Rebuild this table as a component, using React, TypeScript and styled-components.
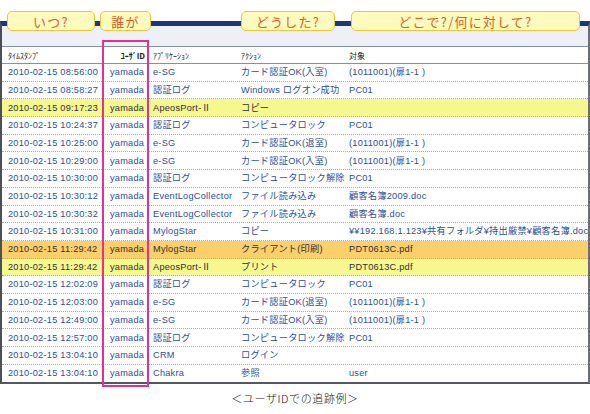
import React from 'react';
import styled, { createGlobalStyle } from 'styled-components';

type Tone = 'plain' | 'yellow' | 'orange';

interface LogRow {
	time: string;
	app: string;
	action: string;
	target: string;
	tone?: Tone;
}

const ROOM = '(1011001)(扉1-1 )';

const rows: LogRow[] = [
	{ time: '2010-02-15 08:56:00', app: 'e-SG', action: 'カード認証OK(入室)', target: ROOM },
	{ time: '2010-02-15 08:58:27', app: '認証ログ', action: 'Windows ログオン成功', target: 'PC01' },
	{ time: '2010-02-15 09:17:23', app: 'ApeosPort-Ⅱ', action: 'コピー', target: '', tone: 'yellow' },
	{ time: '2010-02-15 10:24:37', app: '認証ログ', action: 'コンピュータロック', target: 'PC01' },
	{ time: '2010-02-15 10:25:00', app: 'e-SG', action: 'カード認証OK(退室)', target: ROOM },
	{ time: '2010-02-15 10:29:00', app: 'e-SG', action: 'カード認証OK(入室)', target: ROOM },
	{ time: '2010-02-15 10:30:00', app: '認証ログ', action: 'コンピュータロック解除', target: 'PC01' },
	{ time: '2010-02-15 10:30:12', app: 'EventLogCollector', action: 'ファイル読み込み', target: '顧客名簿2009.doc' },
	{ time: '2010-02-15 10:30:32', app: 'EventLogCollector', action: 'ファイル読み込み', target: '顧客名簿.doc' },
	{ time: '2010-02-15 10:31:00', app: 'MylogStar', action: 'コピー', target: '¥¥192.168.1.123¥共有フォルダ¥持出厳禁¥顧客名簿.doc' },
	{ time: '2010-02-15 11:29:42', app: 'MylogStar', action: 'クライアント(印刷)', target: 'PDT0613C.pdf', tone: 'orange' },
	{ time: '2010-02-15 11:29:42', app: 'ApeosPort-Ⅱ', action: 'プリント', target: 'PDT0613C.pdf', tone: 'yellow' },
	{ time: '2010-02-15 12:02:09', app: '認証ログ', action: 'コンピュータロック', target: 'PC01' },
	{ time: '2010-02-15 12:03:00', app: 'e-SG', action: 'カード認証OK(退室)', target: ROOM },
	{ time: '2010-02-15 12:49:00', app: 'e-SG', action: 'カード認証OK(入室)', target: ROOM },
	{ time: '2010-02-15 12:57:00', app: '認証ログ', action: 'コンピュータロック解除', target: 'PC01' },
	{ time: '2010-02-15 13:04:10', app: 'CRM', action: 'ログイン', target: '' },
	{ time: '2010-02-15 13:04:10', app: 'Chakra', action: '参照', target: 'user' },
];

const tags = [
	{ text: 'いつ?', width: 88, left: 7 },
	{ text: '誰が', width: 51, left: 5 },
	{ text: 'どうした?', width: 94, left: 90 },
	{ text: 'どこで?/何に対して?', width: 229, left: 16 },
];

const App = (): JSX.Element => {
	return (
		<Page>
			<GlobalStyle />
			<TagRow>
				{tags.map((t) => (
					<Tag key={t.text} $width={t.width} $left={t.left}>
						{t.text}
					</Tag>
				))}
			</TagRow>
			<Frame>
				<Band />
				<HeadRow>
					<HeadCell $pad={6}>ﾀｲﾑｽﾀﾝﾌﾟ</HeadCell>
					<HeadCell $right $bold>
						ﾕｰｻﾞID
					</HeadCell>
					<HeadCell $pad={4}>ｱﾌﾟﾘｹｰｼｮﾝ</HeadCell>
					<HeadCell $pad={3}>ｱｸｼｮﾝ</HeadCell>
					<HeadCell $pad={4}>対象</HeadCell>
				</HeadRow>
				{rows.map((r, i) => (
					<Row key={i} $tone={r.tone ?? 'plain'} $last={i === rows.length - 1}>
						<Cell $pad={6}>{r.time}</Cell>
						<Cell $pad={7}>yamada</Cell>
						<Cell $pad={4}>{r.app}</Cell>
						<Cell $pad={3}>{r.action}</Cell>
						<Cell $pad={4}>{r.target}</Cell>
					</Row>
				))}
			</Frame>
			<Caption>＜ユーザIDでの追跡例＞</Caption>
			<UserHighlight />
		</Page>
	);
};

export default App;

const GlobalStyle = createGlobalStyle`
	html, body {
		margin: 0;
		padding: 0;
		background: #ffffff;
	}
	body {
		font-family: "Liberation Sans", "Noto Sans CJK JP", sans-serif;
	}
`;

const Page = styled.div`
	position: relative;
	width: 590px;
	height: 414px;
	padding-top: 11px;
	box-sizing: border-box;
	overflow: hidden;
`;

const TagRow = styled.div`
	position: relative;
	z-index: 1;
	display: flex;
	height: 20px;
	margin-bottom: -10px;
`;

const Tag = styled.div<{ $width: number; $left: number }>`
	width: ${(p) => p.$width}px;
	margin-left: ${(p) => p.$left}px;
	box-sizing: border-box;
	display: flex;
	align-items: center;
	justify-content: center;
	background: #fffbbf;
	border: 1.5px solid #f2c534;
	border-radius: 5px;
	color: #e65a22;
	font-family: "Noto Sans CJK JP", sans-serif;
	font-weight: 400;
	font-size: 13px;
	letter-spacing: 1.2px;
	line-height: 1;
`;

const Frame = styled.div`
	border-top: 5px solid #1c3878;
	border-left: 2px solid #4a4f5c;
	border-right: 2px solid #6b6f78;
	border-bottom: 2px solid #55585f;
	box-sizing: border-box;
	width: 590px;
`;

const Band = styled.div`
	height: 20px;
	background: #edf0f5;
	border-bottom: 1px solid #8290b0;
`;

const grid = `
	display: grid;
	grid-template-columns: 101px 46px 89px 107px 1fr;
	align-items: center;
`;

const HeadRow = styled.div`
	${grid}
	height: 16px;
	background: #ffffff;
	border-bottom: 1px solid #8290b0;
`;

const HeadCell = styled.div<{ $right?: boolean; $bold?: boolean; $pad?: number }>`
	font-family: "Noto Sans CJK JP", sans-serif;
	font-size: 8px;
	color: #222222;
	font-weight: ${(p) => (p.$bold ? 700 : 400)};
	text-align: ${(p) => (p.$right ? 'right' : 'left')};
	padding-left: ${(p) => p.$pad ?? 0}px;
	padding-right: ${(p) => (p.$right ? 4 : 0)}px;
	white-space: nowrap;
`;

const toneBg: Record<Tone, string> = {
	plain: '#ffffff',
	yellow: '#f5f88f',
	orange: '#fbcf69',
};

const Row = styled.div<{ $tone: Tone; $last: boolean }>`
	${grid}
	height: 17.7px;
	box-sizing: border-box;
	background: ${(p) => toneBg[p.$tone]};
	color: ${(p) => (p.$tone === 'plain' ? '#2a4d9f' : '#2e2e3c')};
	border-bottom: ${(p) => (p.$last ? 'none' : '1px dotted #a7adbb')};
`;

const Cell = styled.div<{ $pad: number }>`
	padding-left: ${(p) => p.$pad}px;
	padding-top: 1px;
	font-size: 9.2px;
	letter-spacing: 0.25px;
	white-space: nowrap;
	overflow: hidden;
	line-height: 1;
`;

const Caption = styled.div`
	margin-top: 6px;
	text-align: center;
	font-family: "Noto Sans CJK JP", sans-serif;
	font-weight: 300;
	font-size: 11px;
	letter-spacing: 0.6px;
	color: #111111;
`;

const UserHighlight = styled.div`
	position: absolute;
	left: 102px;
	top: 40px;
	width: 47px;
	height: 347px;
	box-sizing: border-box;
	border: 2.5px solid #e5318d;
	pointer-events: none;
`;
